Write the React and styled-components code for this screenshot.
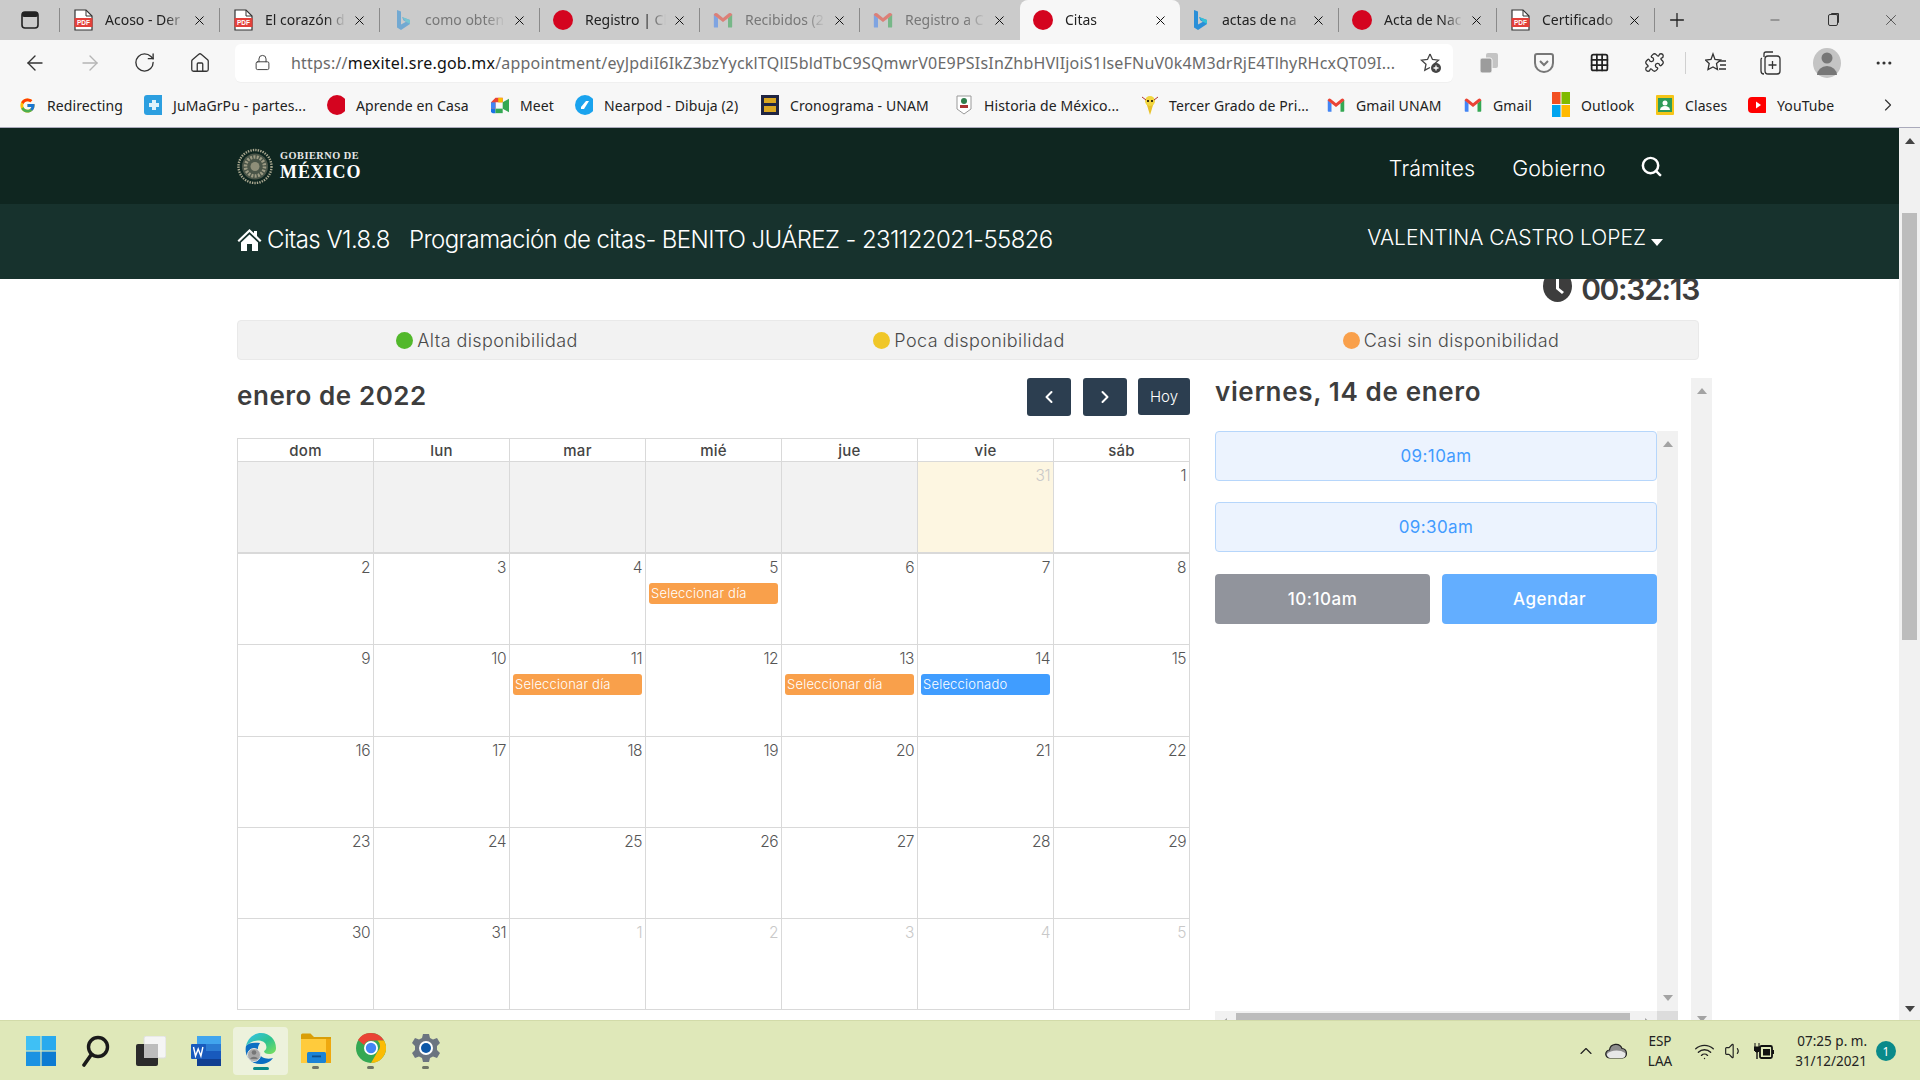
import React from 'react';
import styled, { createGlobalStyle } from 'styled-components';
import { ArrowLeft, ArrowRight, RotateCw, House, Lock, ChevronLeft, ChevronRight, ChevronUp, X, Plus, Minus, Search, Wifi, Volume1, MoreHorizontal, Puzzle, Grid3x3 } from 'lucide-react';
import { FcGoogle } from 'react-icons/fc';

const Global = createGlobalStyle`
  html, body { margin: 0; padding: 0; background: #fff; overflow: hidden; }
  * { box-sizing: border-box; }
`;
const UI = `"Noto Sans", "Open Sans", sans-serif`;
const WEB = `Inter, "Open Sans", sans-serif`;

const Shell = styled.div`width: 1920px; height: 1080px; display: flex; flex-direction: column; overflow: hidden; font-family: ${WEB};`;

/* ---------- browser chrome ---------- */
const TabStrip = styled.div`height: 40px; flex: none; background: #cbcbcb; display: flex; align-items: center; font-family: ${UI};`;
const SideBtn = styled.div`width: 59px; display: flex; justify-content: center; color: #222;`;
const TabSep = styled.div`width: 1px; height: 24px; background: ${p => p.$hide ? 'transparent' : '#8a8a8a'}; flex: none;`;
const Tab = styled.div`
  width: ${p => p.$w || 159}px; height: 40px; flex: none; display: flex; align-items: center; padding: 0 11px 0 ${p => p.$pl || 13}px;
  background: ${p => p.$active ? '#f7f7f7' : 'transparent'}; border-radius: ${p => p.$active ? '8px 8px 0 0' : '0'};
`;
const TabIcon = styled.span`width: 20px; height: 20px; flex: none; display: flex; align-items: center; justify-content: center; opacity: ${p => p.$dim ? .55 : 1};`;
const TabTitle = styled.span`
  flex: 1; margin: -2px 0 0 12px; font-size: 14px; color: ${p => p.$dim ? '#777' : '#222'}; white-space: nowrap; overflow: hidden;
  -webkit-mask-image: linear-gradient(90deg, #000 75%, transparent 100%);
  mask-image: linear-gradient(90deg, #000 75%, transparent 100%);
`;
const TabClose = styled.span`flex: none; width: 18px; display: flex; justify-content: center; color: #111; margin-left: 4px;`;
const NewTab = styled.div`width: 44px; display: flex; justify-content: center; color: #222;`;
const WinBtns = styled.div`margin-left: auto; display: flex; color: #333;`;
const WinBtn = styled.div`width: 58px; height: 40px; display: flex; align-items: center; justify-content: center;`;
const RestoreIcon = styled.span`
  width: 10px; height: 12px; border: 1px solid #333; border-radius: 2px; box-shadow: 2px -2px 0 -1px #333;
`;

const Toolbar = styled.div`height: 45px; flex: none; background: #f7f7f7; display: flex; align-items: center; padding-left: 7px;`;
const ToolBtn = styled.div`width: ${p => p.$w || 55}px; height: 45px; flex: none; display: flex; align-items: center; justify-content: center; color: ${p => p.$off ? '#b5b5b5' : '#333'};`;
const Address = styled.div`
  margin: 0 8px; width: 1218px; height: 38px; flex: none; background: #fff; border-radius: 6px; display: flex; align-items: center; padding: 0 11px 0 19px;
  font-family: ${UI}; font-size: 16px; color: #6a6a6a; box-shadow: 0 1px 1px rgba(0,0,0,.03);
`;
const Url = styled.span`margin-left: 20px; flex: 1; white-space: nowrap; overflow: hidden; letter-spacing: .2px;`;
const Host = styled.b`font-weight: 400; color: #111;`;
const ToolSep = styled.div`width: 4px; height: 22px; flex: none; border-right: 1px solid #d0d0d0; margin-right: 3px;`;
const Avatar = styled.div`width: 28px; height: 30px; border-radius: 50%; background: #c4c4c4; display: flex; align-items: center; justify-content: center;`;

const Bookmarks = styled.div`height: 43px; flex: none; background: #f7f7f7; border-bottom: 1px solid #aab; display: flex; align-items: center; padding: 0 0 2px 18px; font-family: ${UI}; font-size: 14px; color: #222;`;
const Bookmark = styled.div`width: ${p => p.$w}px; flex: none; display: flex; align-items: center; gap: 11px; white-space: nowrap; letter-spacing: .1px;`;
const BmIcon = styled.span`width: 18px; height: 18px; flex: none; display: flex; align-items: center; justify-content: center;`;
const BmMore = styled.div`margin: 0 11px 0 auto; width: 42px; display: flex; justify-content: center; color: #333;`;

/* ---------- page ---------- */
const Viewport = styled.div`flex: 1; min-height: 0; display: flex; overflow: hidden;`;
const Page = styled.div`flex: 1; min-width: 0; display: flex; flex-direction: column; overflow: hidden;`;
const GovBar = styled.header`height: 76px; flex: none; background: #0f2620; display: flex; align-items: center; padding: 0 236px 0 237px; color: #fff;`;
const Logo = styled.div`display: flex; align-items: center; gap: 7px;`;
const LogoText = styled.div`display: flex; flex-direction: column; font-family: "Liberation Serif", serif; font-weight: 700; line-height: 1;`;
const LogoTop = styled.span`font-size: 10.3px; letter-spacing: .5px; color: #e8e8e8;`;
const LogoMain = styled.span`font-size: 18px; letter-spacing: .9px; margin-top: 2px;`;
const GovNav = styled.nav`margin-left: auto; display: flex; align-items: center; gap: 37px; font-size: 21.5px; font-weight: 300; letter-spacing: .1px;`;
const NavLink = styled.span`margin-top: 4px;`;
const NavSearch = styled(Search)`margin-left: -2.5px;`;
const SubBar = styled.div`height: 75px; flex: none; background: #17322d; display: flex; align-items: center; padding: 0 236px 0 237px; color: #fff; font-weight: 300;`;
const HomeGlyph = styled.svg`width: 25px; height: 24px; flex: none; margin-top: -4px;`;
const SubTitle = styled.span`font-size: 24px; margin: -4px 0 0 5px; letter-spacing: -.55px;`;
const SubText = styled.span`font-size: 24px; margin: -4px 0 0 19px; letter-spacing: -.6px;`;
const UserName = styled.div`margin: -8px 0 0 auto; display: flex; align-items: center; gap: 5px; font-size: 21px; letter-spacing: 0;`;
const Caret = styled.span`width: 0; height: 0; border-left: 6.5px solid transparent; border-right: 6.5px solid transparent; border-top: 7px solid #fff; margin-top: 9px;`;

const Content = styled.main`flex: 1; min-height: 0; overflow: hidden; padding: 0 200px 0 237px; color: #444;`;
const TimerRow = styled.div`height: 41px; display: flex; justify-content: flex-end; align-items: flex-start; gap: 9px; color: #3d3d3d;`;
const ClockGlyph = styled.svg`width: 29px; height: 32px; flex: none; margin-top: -9px;`;
const TimerText = styled.span`font-size: 30px; font-weight: 600; line-height: 20px; letter-spacing: -1.3px;`;
const Legend = styled.div`height: 40px; display: grid; grid-template-columns: repeat(3, 1fr); align-items: center; padding: 0 6px 0 8px; background: #f2f2f2; border: 1px solid #e9e9e9; border-radius: 4px; font-size: 18px; font-weight: 300; color: #4a4a4a;`;
const LegendItem = styled.div`display: flex; align-items: center; justify-content: center; gap: 4px; letter-spacing: .4px;`;
const Dot = styled.span`width: 17px; height: 17px; border-radius: 50%; background: ${p => p.$c};`;

const Columns = styled.div`margin-top: 18px; display: flex; gap: 25px; align-items: flex-start;`;
const CalCol = styled.section`width: 953px; flex: none;`;
const CalHead = styled.div`height: 60px; display: flex; align-items: flex-start; justify-content: space-between;`;
const CalTitle = styled.h2`margin: 0; font-size: 26px; font-weight: 600; color: #3d3d3d; line-height: 36px; letter-spacing: .55px;`;
const NavBtns = styled.div`display: flex; gap: 11.5px;`;
const NavBtn = styled.button`
  width: ${p => p.$w || 44}px; height: ${p => p.$h || 38}px; border: 0; border-radius: 3px; background: #2c3e50; color: #fff; padding: 0;
  display: flex; align-items: center; justify-content: center; font-family: ${WEB}; font-size: 15px; font-weight: 300;
`;
const Cal = styled.div`display: grid; grid-template-columns: repeat(7, 1fr); border-left: 1px solid #d9d9d9; border-top: 1px solid #d9d9d9;`;
const Dow = styled.div`height: 23px; border-right: 1px solid #d9d9d9; border-bottom: 1px solid #d9d9d9; display: flex; align-items: center; justify-content: center; font-size: 15px; font-weight: 500; color: #444; letter-spacing: .25px;`;
const Cell = styled.div`
  height: ${p => p.$h || 91.3}px; border-right: 1px solid #d9d9d9; border-bottom: ${p => p.$thick ? '2' : '1'}px solid #d9d9d9; padding: 3px 3px 0; display: flex; flex-direction: column;
  background: ${p => p.$bg || '#fff'};
`;
const DayNum = styled.span`align-self: flex-end; font-size: 15.5px; font-weight: 300; line-height: 21px; color: ${p => p.$off ? '#c9c9c9' : '#555'}; letter-spacing: -.5px;`;
const Chip = styled.div`margin-top: 5px; height: 21px; border-radius: 3px; background: ${p => p.$c}; color: #fff; font-size: 13px; font-weight: 300; line-height: 21px; padding-left: 2px; white-space: nowrap; letter-spacing: .2px;`;

const SideCol = styled.aside`width: 497px; flex: none; height: 654px; display: flex;`;
const SideMain = styled.div`width: 476px; flex: none;`;
const SideTitle = styled.h2`margin: 0; height: 53px; font-size: 26px; font-weight: 600; color: #3d3d3d; line-height: 28px; letter-spacing: .65px;`;
const SlotPanel = styled.div`width: 463px; height: 602px; display: grid; grid-template-columns: 442px 21px; grid-template-rows: 580px 21px;`;
const Slots = styled.div`display: flex; flex-direction: column; gap: 21px;`;
const Slot = styled.button`height: 50px; border: 1px solid #b6d6fb; border-radius: 4px; background: #ecf3fe; color: #429bff; font-family: ${WEB}; font-size: 17px; font-weight: 400; padding: 0; letter-spacing: .4px;`;
const ActionRow = styled.div`display: flex; gap: 12px; margin-top: 1px;`;
const Action = styled.button`flex: 1; height: 50px; border: 0; border-radius: 4px; background: ${p => p.$c}; color: #fff; font-family: ${WEB}; font-size: 17px; font-weight: 500; padding: 0; letter-spacing: .5px;`;
const VBar = styled.div`width: 21px; background: #f1f1f1; flex: none; display: flex; flex-direction: column; align-items: center; justify-content: space-between; padding: 10px 0;`;
const HBar = styled.div`background: #f1f1f1; display: flex; align-items: flex-start; justify-content: space-between; padding: 2px 6px 0;`;
const HThumb = styled.div`width: 394px; height: 17px; background: #bcbcbc; margin-right: 6px;`;
const HArrow = styled.span`
  width: 0; height: 0; margin-top: 5px; border-top: 5px solid transparent; border-bottom: 5px solid transparent;
  ${p => p.$right ? 'border-left: 6px solid #a3a3a3;' : 'border-right: 6px solid #a3a3a3;'}
`;
const Corner = styled.div`background: #dcdcdc;`;
const Tri = styled.span`
  width: 0; height: 0; border-left: 5px solid transparent; border-right: 5px solid transparent;
  ${p => p.$down ? `border-top: 6px solid ${p.$c || '#a3a3a3'};` : `border-bottom: 6px solid ${p.$c || '#a3a3a3'};`}
`;

const PageBar = styled.div`width: 21px; flex: none; background: #f1f1f1; display: flex; flex-direction: column; align-items: center; padding: 10px 0 8px;`;
const PageThumb = styled.div`width: 15px; height: 427px; background: #bcbcbc; margin: 69px 0 auto;`;

/* ---------- taskbar ---------- */
const Taskbar = styled.footer`height: 60px; flex: none; background: #dfe8b9; border-top: 1px solid #d2dba9; display: flex; align-items: center; padding: 1px 0 0 13px; font-family: ${UI};`;
const TaskItem = styled.div`width: 55px; height: 48px; flex: none; border-radius: 4px; display: flex; flex-direction: column; align-items: center; justify-content: center; background: ${p => p.$active ? '#edf2dc' : 'transparent'};`;
const TaskMark = styled.span`height: 3px; margin-top: 3px; width: ${p => p.$active ? 16 : 7}px; border-radius: 2px; background: ${p => p.$active ? '#0a8a8a' : p.$open ? '#6f7565' : 'transparent'};`;
const Tray = styled.div`margin-left: auto; display: flex; align-items: center; color: #222; font-size: 13.5px;`;
const TrayIcon = styled.span`width: ${p => p.$w || 30}px; display: flex; align-items: center; justify-content: center;`;
const TrayStack = styled.div`display: flex; flex-direction: column; align-items: ${p => p.$align || 'center'}; line-height: 20px; width: ${p => p.$w}px; white-space: nowrap;`;
const Badge = styled.span`width: 20px; height: 20px; border-radius: 50%; background: #0a8a8a; color: #fff; font-size: 12px; display: flex; align-items: center; justify-content: center; margin: 0 24px 0 9px;`;
const PdfLabel = styled.text`font-family: "Liberation Sans", sans-serif; font-size: 6.5px; font-weight: 700; fill: #fff;`;

/* ---------- drawings ---------- */
const RedDot = () => <svg width="20" height="20"><circle cx="10" cy="10" r="10" fill="#d4041f" /></svg>;
const PdfIcon = () => (
  <svg width="19" height="22" viewBox="0 0 19 22">
    <path d="M1 1h11l6 6v14H1z" fill="#fff" stroke="#333" strokeWidth="1.2" />
    <path d="M12 1v6h6" fill="none" stroke="#333" strokeWidth="1" />
    <rect x="0.500" y="9" width="18" height="9" fill="#e2403a" />
    <PdfLabel x="9.500" y="16" textAnchor="middle">PDF</PdfLabel>
  </svg>
);
const BingIcon = () => (
  <svg width="16" height="22" viewBox="0 0 16 22">
    <path d="M2 1l4 1.500v13l5-2.800-2.500-1.200L7 8l8 3v4l-9 6-4-2.500z" fill="#2a8fd8" />
    <path d="M7 8l8 3v4l-4-2.300z" fill="#35c1d6" />
  </svg>
);
const GmailIcon = () => (
  <svg width="20" height="18" viewBox="0 0 24 20">
    <path fill="#4285F4" d="M1 3v15a1 1 0 0 0 1 1h4V8z" />
    <path fill="#34A853" d="M23 3v15a1 1 0 0 1-1 1h-4V8z" />
    <path fill="#EA4335" d="M1 4a2.500 2.500 0 0 1 4-2l7 5.500L19 2a2.500 2.500 0 0 1 4 2l-5 4-6 4.500L6 8z" />
  </svg>
);
const Seal = () => (
  <svg width="36" height="37" viewBox="0 0 36 37">
    <circle cx="18" cy="18.500" r="16.500" fill="none" stroke="#a9a78f" strokeWidth="2.400" strokeDasharray="1.400 1.100" />
    <circle cx="18" cy="18.500" r="13" fill="#4a5548" />
    <circle cx="18" cy="18.500" r="9.500" fill="none" stroke="#9c9b84" strokeWidth="3.500" strokeDasharray="2 1.300" />
    <circle cx="18" cy="18.500" r="4.500" fill="#8e8e78" />
  </svg>
);
const WinLogo = () => (
  <svg width="30" height="30" viewBox="0 0 30 30">
    <rect x="0" y="0" width="14.400" height="14.400" fill="#3fc0f5" /><rect x="15.600" y="0" width="14.400" height="14.400" fill="#29aaee" />
    <rect x="0" y="15.600" width="14.400" height="14.400" fill="#1a92e2" /><rect x="15.600" y="15.600" width="14.400" height="14.400" fill="#0c7bd2" />
  </svg>
);
const TaskSearch = () => (
  <svg width="30" height="32" viewBox="0 0 30 32">
    <circle cx="17" cy="12" r="9.500" fill="none" stroke="#1a1a1a" strokeWidth="3.400" />
    <path d="M10 20L3 30" stroke="#1a1a1a" strokeWidth="3.600" strokeLinecap="round" />
  </svg>
);
const TaskView = () => (
  <svg width="30" height="30" viewBox="0 0 30 30">
    <rect x="8" y="0" width="22" height="22" rx="2" fill="#f5f5f5" stroke="#ddd" />
    <rect x="0" y="8" width="22" height="22" rx="2" fill="#2b2b2b" />
    <rect x="8" y="8" width="14" height="14" fill="#bdbdbd" />
  </svg>
);
const WordIcon = () => (
  <svg width="30" height="30" viewBox="0 0 30 30">
    <rect x="6" y="0" width="24" height="30" rx="2" fill="#2b7cd3" />
    <rect x="6" y="0" width="24" height="8" fill="#41a5ee" /><rect x="6" y="15" width="24" height="8" fill="#185abd" /><rect x="6" y="23" width="24" height="7" fill="#103f91" />
    <rect x="0" y="8" width="15" height="15" rx="1" fill="#185abd" />
    <path d="M2.500 11l2 9 2.700-7 2.700 7 2-9" fill="none" stroke="#fff" strokeWidth="1.400" />
  </svg>
);
const EdgeIcon = () => (
  <svg width="31" height="31" viewBox="0 0 31 31">
    <defs><linearGradient id="e1" x1="0" y1="0" x2="1" y2="1"><stop offset="0" stopColor="#35c1f1" /><stop offset=".55" stopColor="#2fc48e" /><stop offset="1" stopColor="#7fe15a" /></linearGradient></defs>
    <path d="M1 13C3 4 10 0 16 0c9 0 15 7 15 15 0 4-3 6-7 6-3 0-5-1-5-3 2-1 3-3 2-6C19 6 7 6 1 13z" fill="url(#e1)" />
    <path d="M1 13c-2 9 4 18 14 18 6 0 10-2 13-6-3 1-8 1-11-1-4-3-6-8-2-14C8 9 3 10 1 13z" fill="#0c6fc3" />
    <circle cx="9" cy="22" r="6.500" fill="#a7a7a7" stroke="#e4e4e4" /><circle cx="9" cy="19.500" r="2.300" fill="#777" /><path d="M5 26a4.500 4 0 0 1 8 0z" fill="#777" />
  </svg>
);
const FolderIcon = () => (
  <svg width="32" height="30" viewBox="0 0 32 30">
    <path d="M1 2a1.500 1.500 0 0 1 1.500-1.500h8L14 4h17v3H1z" fill="#d99e07" />
    <rect x="1" y="6" width="30" height="24" fill="#ffcb3c" /><rect x="26" y="6" width="5" height="24" fill="#efa80f" />
    <rect x="7" y="19" width="19" height="11" rx="1.500" fill="#1a83d6" /><rect x="12" y="22.500" width="9" height="1.800" fill="#0c4e8a" />
  </svg>
);
const ChromeIcon = () => (
  <svg width="30" height="30" viewBox="0 0 30 30">
    <circle cx="15" cy="15" r="15" fill="#34a853" />
    <path d="M15 0a15 15 0 0 1 13 7.500H15a7.500 7.500 0 0 0-6.900 4.500L2 7A15 15 0 0 1 15 0z" fill="#ea4335" />
    <path d="M28 7.500A15 15 0 0 1 15 30l6.500-11.200a7.500 7.500 0 0 0 0-11.300z" fill="#fbbc04" />
    <circle cx="15" cy="15" r="7" fill="#fff" /><circle cx="15" cy="15" r="5.200" fill="#4285f4" />
  </svg>
);
const GearIcon = () => (
  <svg width="30" height="30" viewBox="0 0 30 30">
    <path d="M12 1h6l1 4 3 1.500 4-1.500 3 5-3 3v4l3 3-3 5-4-1.500-3 1.500-1 4h-6l-1-4-3-1.500-4 1.500-3-5 3-3v-4L1 10l3-5 4 1.500L11 5z" fill="#6b7480" />
    <circle cx="15" cy="15" r="7" fill="#fff" /><circle cx="15" cy="15" r="5" fill="#0c57a8" />
  </svg>
);
const Cloud = () => (
  <svg width="22" height="16" viewBox="0 0 22 16">
    <path d="M5 15a4 4 0 0 1-.5-8A6.500 6.500 0 0 1 17 5.500 4.800 4.800 0 0 1 17.500 15z" fill="#8c8c8c" stroke="#222" strokeWidth="1.200" />
    <path d="M2 11c3-4 13-5 18-1 1 2 0 5-2.500 5H5a4 4 0 0 1-3-4z" fill="#e7e7e7" />
  </svg>
);
const Plug = () => (
  <svg width="20" height="18" viewBox="0 0 20 18">
    <rect x="6" y="4" width="12" height="12" rx="1.500" fill="none" stroke="#111" strokeWidth="1.800" /><rect x="9" y="7" width="7" height="6.500" fill="#111" />
    <rect x="18" y="8" width="2" height="4" fill="#111" /><path d="M1 1v4M5 1v4M0 5h6v3l-2 2H2L0 8z" stroke="#111" fill="#111" /><path d="M3 10v7" stroke="#111" strokeWidth="1.400" />
  </svg>
);
const SmallSquares = () => (
  <svg width="18" height="26" viewBox="0 0 18 26">
    <rect x="0" y="0" width="8.500" height="12" fill="#f25022" /><rect x="9.500" y="0" width="8.500" height="12" fill="#7fba00" />
    <rect x="0" y="13" width="8.500" height="12" fill="#00a4ef" /><rect x="9.500" y="13" width="8.500" height="12" fill="#ffb900" />
  </svg>
);

const tabs = [
  { t: 'Acoso - Der', i: <PdfIcon />, w: 159 },
  { t: 'El corazón d', i: <PdfIcon />, w: 159 },
  { t: 'como obten', i: <BingIcon />, dim: true },
  { t: 'Registro | Cl', i: <RedDot /> },
  { t: 'Recibidos (2', i: <GmailIcon />, dim: true },
  { t: 'Registro a C', i: <GmailIcon />, dim: true },
  { t: 'Citas', i: <RedDot />, active: true, w: 160 },
  { t: 'actas de na', i: <BingIcon />, w: 157, pl: 9 },
  { t: 'Acta de Nac', i: <RedDot />, w: 157 },
  { t: 'Certificado', i: <PdfIcon />, w: 157 },
];

const bookmarks = [
  { t: 'Redirecting', w: 126, i: <FcGoogle size={17} /> },
  { t: 'JuMaGrPu - partes...', w: 183, i: <svg width="20" height="20"><rect width="20" height="20" rx="3" fill="#2c9fe0" /><path d="M5 8h3V5h4v3h3v4h-3v3H8v-3H5z" fill="#dff2fb" /></svg> },
  { t: 'Aprende en Casa', w: 164, i: <RedDot /> },
  { t: 'Meet', w: 84, i: <svg width="20" height="17" viewBox="0 0 20 17"><path d="M0 5l5-5h8v5H5v7H0z" fill="#ea4335" /><rect x="0" y="5" width="5" height="7" fill="#4285f4" /><path d="M0 12h5v5H2a2 2 0 0 1-2-2z" fill="#1a73e8" /><rect x="5" y="12" width="8" height="5" fill="#34a853" /><rect x="8" y="0" width="5" height="5" fill="#fbbc04" /><path d="M13 5l7-4v15l-7-4z" fill="#34a853" /></svg> },
  { t: 'Nearpod - Dibuja (2)', w: 186, i: <svg width="20" height="20"><circle cx="10" cy="10" r="10" fill="#1aa3ee" /><path d="M6 12l5-6h3l-5 8H6z" fill="#fff" /></svg> },
  { t: 'Cronograma - UNAM', w: 194, i: <svg width="18" height="20"><rect width="18" height="20" fill="#1f2442" /><rect x="3" y="3" width="12" height="5" fill="#d9a520" /><rect x="3" y="11" width="12" height="6" fill="#d9a520" /></svg> },
  { t: 'Historia de México...', w: 185, i: <svg width="16" height="20"><path d="M1 1h14v13l-7 5-7-5z" fill="#fff" stroke="#999" /><circle cx="8" cy="6" r="3" fill="#2e7d4a" /><rect x="4" y="10" width="8" height="3" fill="#a33" /></svg> },
  { t: 'Tercer Grado de Pri...', w: 187, i: <svg width="20" height="22"><path d="M10 21L6 8h8z" fill="#e8c22a" /><circle cx="10" cy="7" r="5" fill="#f2d640" /><circle cx="8" cy="7" r="1" /><circle cx="12" cy="7" r="1" /><path d="M2 3l4 3M18 3l-4 3" stroke="#a33" /></svg> },
  { t: 'Gmail UNAM', w: 137, i: <GmailIcon /> },
  { t: 'Gmail', w: 88, i: <GmailIcon /> },
  { t: 'Outlook', w: 104, i: <SmallSquares /> },
  { t: 'Clases', w: 92, i: <svg width="18" height="20"><rect width="18" height="20" rx="1" fill="#f5c518" /><rect x="2" y="3" width="14" height="14" fill="#2e9b58" /><circle cx="9" cy="8" r="2.500" fill="#fff" /><path d="M4 15a5 4 0 0 1 10 0z" fill="#fff" /></svg> },
  { t: 'YouTube', w: 90, i: <svg width="20" height="16"><rect width="20" height="16" rx="4" fill="#f00" /><path d="M8 4.500l5 3.500-5 3.500z" fill="#fff" /></svg> },
];

const events = {
  5: { c: '#f9a04b', t: 'Seleccionar día' }, 11: { c: '#f9a04b', t: 'Seleccionar día' },
  13: { c: '#f9a04b', t: 'Seleccionar día' }, 14: { c: '#409dff', t: 'Seleccionado' },
};
const firstRow = [null, null, null, null, null, 'prev', 1];

export default function App() {
  const cells = [];
  firstRow.forEach((d, i) => {
    if (d === null) cells.push(<Cell key={'e' + i} $bg="#f2f2f2" $thick $h={92} />);
    else if (d === 'prev') cells.push(<Cell key="prev" $bg="#fdf6e1" $thick $h={92}><DayNum $off>31</DayNum></Cell>);
    else cells.push(<Cell key="one" $thick $h={92}><DayNum>1</DayNum></Cell>);
  });
  for (let d = 2; d <= 31; d++) {
    cells.push(<Cell key={d}><DayNum>{d}</DayNum>{events[d] && <Chip $c={events[d].c}>{events[d].t}</Chip>}</Cell>);
  }
  for (let d = 1; d <= 5; d++) cells.push(<Cell key={'n' + d}><DayNum $off>{d}</DayNum></Cell>);

  return (
    <Shell>
      <Global />
      <TabStrip>
        <SideBtn><svg width="20" height="20" viewBox="0 0 20 20"><rect x="2" y="2" width="16" height="16" rx="3" fill="none" stroke="#222" strokeWidth="1.600" /><rect x="2" y="2" width="16" height="5" rx="2" fill="#222" /></svg></SideBtn>
        {tabs.map((tab, i) => (
          <React.Fragment key={i}>
            <TabSep $hide={tab.active || (tabs[i - 1] && tabs[i - 1].active)} />
            <Tab $active={tab.active} $w={tab.w} $pl={tab.pl}>
              <TabIcon $dim={tab.dim}>{tab.i}</TabIcon>
              <TabTitle $dim={tab.dim}>{tab.t}</TabTitle>
              <TabClose><X size={15} strokeWidth={1.600} /></TabClose>
            </Tab>
          </React.Fragment>
        ))}
        <TabSep />
        <NewTab><Plus size={22} strokeWidth={1.400} /></NewTab>
        <WinBtns>
          <WinBtn><Minus size={14} strokeWidth={1.200} /></WinBtn>
          <WinBtn><RestoreIcon /></WinBtn>
          <WinBtn><X size={18} strokeWidth={1} /></WinBtn>
        </WinBtns>
      </TabStrip>
      <Toolbar>
        <ToolBtn><ArrowLeft size={24} strokeWidth={1.400} /></ToolBtn>
        <ToolBtn $off><ArrowRight size={24} strokeWidth={1.400} /></ToolBtn>
        <ToolBtn><RotateCw size={23} strokeWidth={1.400} /></ToolBtn>
        <ToolBtn><House size={22} strokeWidth={1.400} /></ToolBtn>
        <Address>
          <Lock size={17} strokeWidth={1.400} color="#444" />
          <Url>https://<Host>mexitel.sre.gob.mx</Host>/appointment/eyJpdiI6IkZ3bzYycklTQlI5bldTbC9SQmwrV0E9PSIsInZhbHVlIjoiS1lseFNuV0k4M3drRjE4TlhyRHcxQT09I...</Url>
          <svg width="22" height="22" viewBox="0 0 22 22"><path d="M10 2l2.500 5.500 6 .7-4.500 4 1 3.800M10 2L7.500 7.500l-6 .7 4.500 4-1.200 6L10 15.500" fill="none" stroke="#444" strokeWidth="1.300" /><circle cx="16" cy="16" r="5" fill="#444" /><path d="M16 13.500v5M13.500 16h5" stroke="#fff" strokeWidth="1.300" /></svg>
        </Address>
        <ToolBtn $w={55}><svg width="20" height="22" viewBox="0 0 20 22"><rect x="7" y="1" width="12" height="15" rx="2" fill="#c4c4c4" /><rect x="1" y="6" width="12" height="15" rx="2" fill="#9c9c9c" stroke="#f7f7f7" /></svg></ToolBtn>
        <ToolBtn $w={56}><svg width="20" height="20" viewBox="0 0 20 20"><path d="M1 3a2 2 0 0 1 2-2h14a2 2 0 0 1 2 2v7a9 9 0 0 1-18 0z" fill="none" stroke="#777" strokeWidth="2" /><path d="M6 8l4 4 4-4" fill="none" stroke="#777" strokeWidth="2" /></svg></ToolBtn>
        <ToolBtn $w={55}><Grid3x3 size={21} strokeWidth={2} color="#222" /></ToolBtn>
        <ToolBtn $w={55}><Puzzle size={21} strokeWidth={1.500} /></ToolBtn>
        <ToolSep />
        <ToolBtn $w={54}><svg width="22" height="22" viewBox="0 0 22 22"><path d="M8 2l2 5.500 5.500.5-4 3.500 1 6L8 15l-5 2.500 1.200-6L0.500 8 6 7.500z" fill="none" stroke="#333" strokeWidth="1.300" /><path d="M14 9h7M15 13h6M14 17h7" stroke="#333" strokeWidth="1.300" /></svg></ToolBtn>
        <ToolBtn $w={54}><svg width="22" height="24" viewBox="0 0 22 24"><path d="M5 6V3a2 2 0 0 1 2-2h7" fill="none" stroke="#333" strokeWidth="1.300" /><path d="M2 9a2 2 0 0 1 1-2M2 9v11a3 3 0 0 0 3 3" fill="none" stroke="#333" strokeWidth="1.300" /><rect x="6" y="5" width="15" height="18" rx="3" fill="none" stroke="#333" strokeWidth="1.300" /><path d="M13.500 10v8M9.500 14h8" stroke="#333" strokeWidth="1.300" /></svg></ToolBtn>
        <ToolBtn $w={60}><Avatar><svg width="22" height="26" viewBox="0 0 22 26"><circle cx="11" cy="8" r="5.500" fill="#777" /><path d="M1 25a10 9 0 0 1 20 0z" fill="#777" /></svg></Avatar></ToolBtn>
        <ToolBtn $w={54}><MoreHorizontal size={20} strokeWidth={1.800} /></ToolBtn>
      </Toolbar>
      <Bookmarks>
        {bookmarks.map((b, i) => (
          <Bookmark key={i} $w={b.w}><BmIcon>{b.i}</BmIcon>{b.t}</Bookmark>
        ))}
        <BmMore><ChevronRight size={20} strokeWidth={1.400} /></BmMore>
      </Bookmarks>

      <Viewport>
        <Page>
          <GovBar>
            <Logo>
              <Seal />
              <LogoText><LogoTop>GOBIERNO DE</LogoTop><LogoMain>MÉXICO</LogoMain></LogoText>
            </Logo>
            <GovNav>
              <NavLink>Trámites</NavLink>
              <NavLink>Gobierno</NavLink>
              <NavSearch size={23} strokeWidth={2.600} />
            </GovNav>
          </GovBar>
          <SubBar>
            <HomeGlyph viewBox="0 0 25 24"><path d="M12.500 1L0.500 12.500l1.500 1.500L12.500 4 23 14l1.500-1.500L20 8V3h-3v2.200z" fill="#fff" /><path d="M4 14.500L12.500 6.500 21 14.500V23h-6v-7h-5v7H4z" fill="#fff" /></HomeGlyph>
            <SubTitle>Citas V1.8.8</SubTitle>
            <SubText>Programación de citas- BENITO JUÁREZ - 231122021-55826</SubText>
            <UserName>VALENTINA CASTRO LOPEZ <Caret /></UserName>
          </SubBar>
          <Content>
            <TimerRow>
              <ClockGlyph viewBox="0 0 29 32"><ellipse cx="14.500" cy="16" rx="14.500" ry="16" fill="#3d3d3d" /><path d="M13 6h3v12l5 4-2 2-6-5z" fill="#fff" /></ClockGlyph>
              <TimerText>00:32:13</TimerText>
            </TimerRow>
            <Legend>
              <LegendItem><Dot $c="#52b82b" />Alta disponibilidad</LegendItem>
              <LegendItem><Dot $c="#f0c728" />Poca disponibilidad</LegendItem>
              <LegendItem><Dot $c="#f9a04b" />Casi sin disponibilidad</LegendItem>
            </Legend>
            <Columns>
              <CalCol>
                <CalHead>
                  <CalTitle>enero de 2022</CalTitle>
                  <NavBtns>
                    <NavBtn><ChevronLeft size={20} strokeWidth={2.400} /></NavBtn>
                    <NavBtn><ChevronRight size={20} strokeWidth={2.400} /></NavBtn>
                    <NavBtn $w={52} $h={37}>Hoy</NavBtn>
                  </NavBtns>
                </CalHead>
                <Cal>
                  {['dom', 'lun', 'mar', 'mié', 'jue', 'vie', 'sáb'].map(d => <Dow key={d}>{d}</Dow>)}
                  {cells}
                </Cal>
              </CalCol>
              <SideCol>
                <SideMain>
                  <SideTitle>viernes, 14 de enero</SideTitle>
                  <SlotPanel>
                    <Slots>
                      <Slot>09:10am</Slot>
                      <Slot>09:30am</Slot>
                      <ActionRow>
                        <Action $c="#91949c">10:10am</Action>
                        <Action $c="#63aeff">Agendar</Action>
                      </ActionRow>
                    </Slots>
                    <VBar><Tri /><Tri $down /></VBar>
                    <HBar><HArrow /><HThumb /><HArrow $right /></HBar>
                    <Corner />
                  </SlotPanel>
                </SideMain>
                <VBar><Tri /><Tri $down /></VBar>
              </SideCol>
            </Columns>
          </Content>
        </Page>
        <PageBar>
          <Tri $c="#444" />
          <PageThumb />
          <Tri $down $c="#444" />
        </PageBar>
      </Viewport>

      <Taskbar>
        <TaskItem><WinLogo /></TaskItem>
        <TaskItem><TaskSearch /></TaskItem>
        <TaskItem><TaskView /></TaskItem>
        <TaskItem><WordIcon /></TaskItem>
        <TaskItem $active><EdgeIcon /><TaskMark $active /></TaskItem>
        <TaskItem><FolderIcon /><TaskMark $open /></TaskItem>
        <TaskItem><ChromeIcon /><TaskMark $open /></TaskItem>
        <TaskItem><GearIcon /><TaskMark $open /></TaskItem>
        <Tray>
          <TrayIcon><ChevronUp size={20} strokeWidth={1.400} /></TrayIcon>
          <TrayIcon><Cloud /></TrayIcon>
          <TrayStack $w={58}><span>ESP</span><span>LAA</span></TrayStack>
          <TrayIcon><Wifi size={21} strokeWidth={1.600} /></TrayIcon>
          <TrayIcon><Volume1 size={20} strokeWidth={1.400} /></TrayIcon>
          <TrayIcon><Plug /></TrayIcon>
          <TrayStack $w={88} $align="flex-end"><span>07:25 p. m.</span><span>31/12/2021</span></TrayStack>
          <Badge>1</Badge>
        </Tray>
      </Taskbar>
    </Shell>
  );
}
